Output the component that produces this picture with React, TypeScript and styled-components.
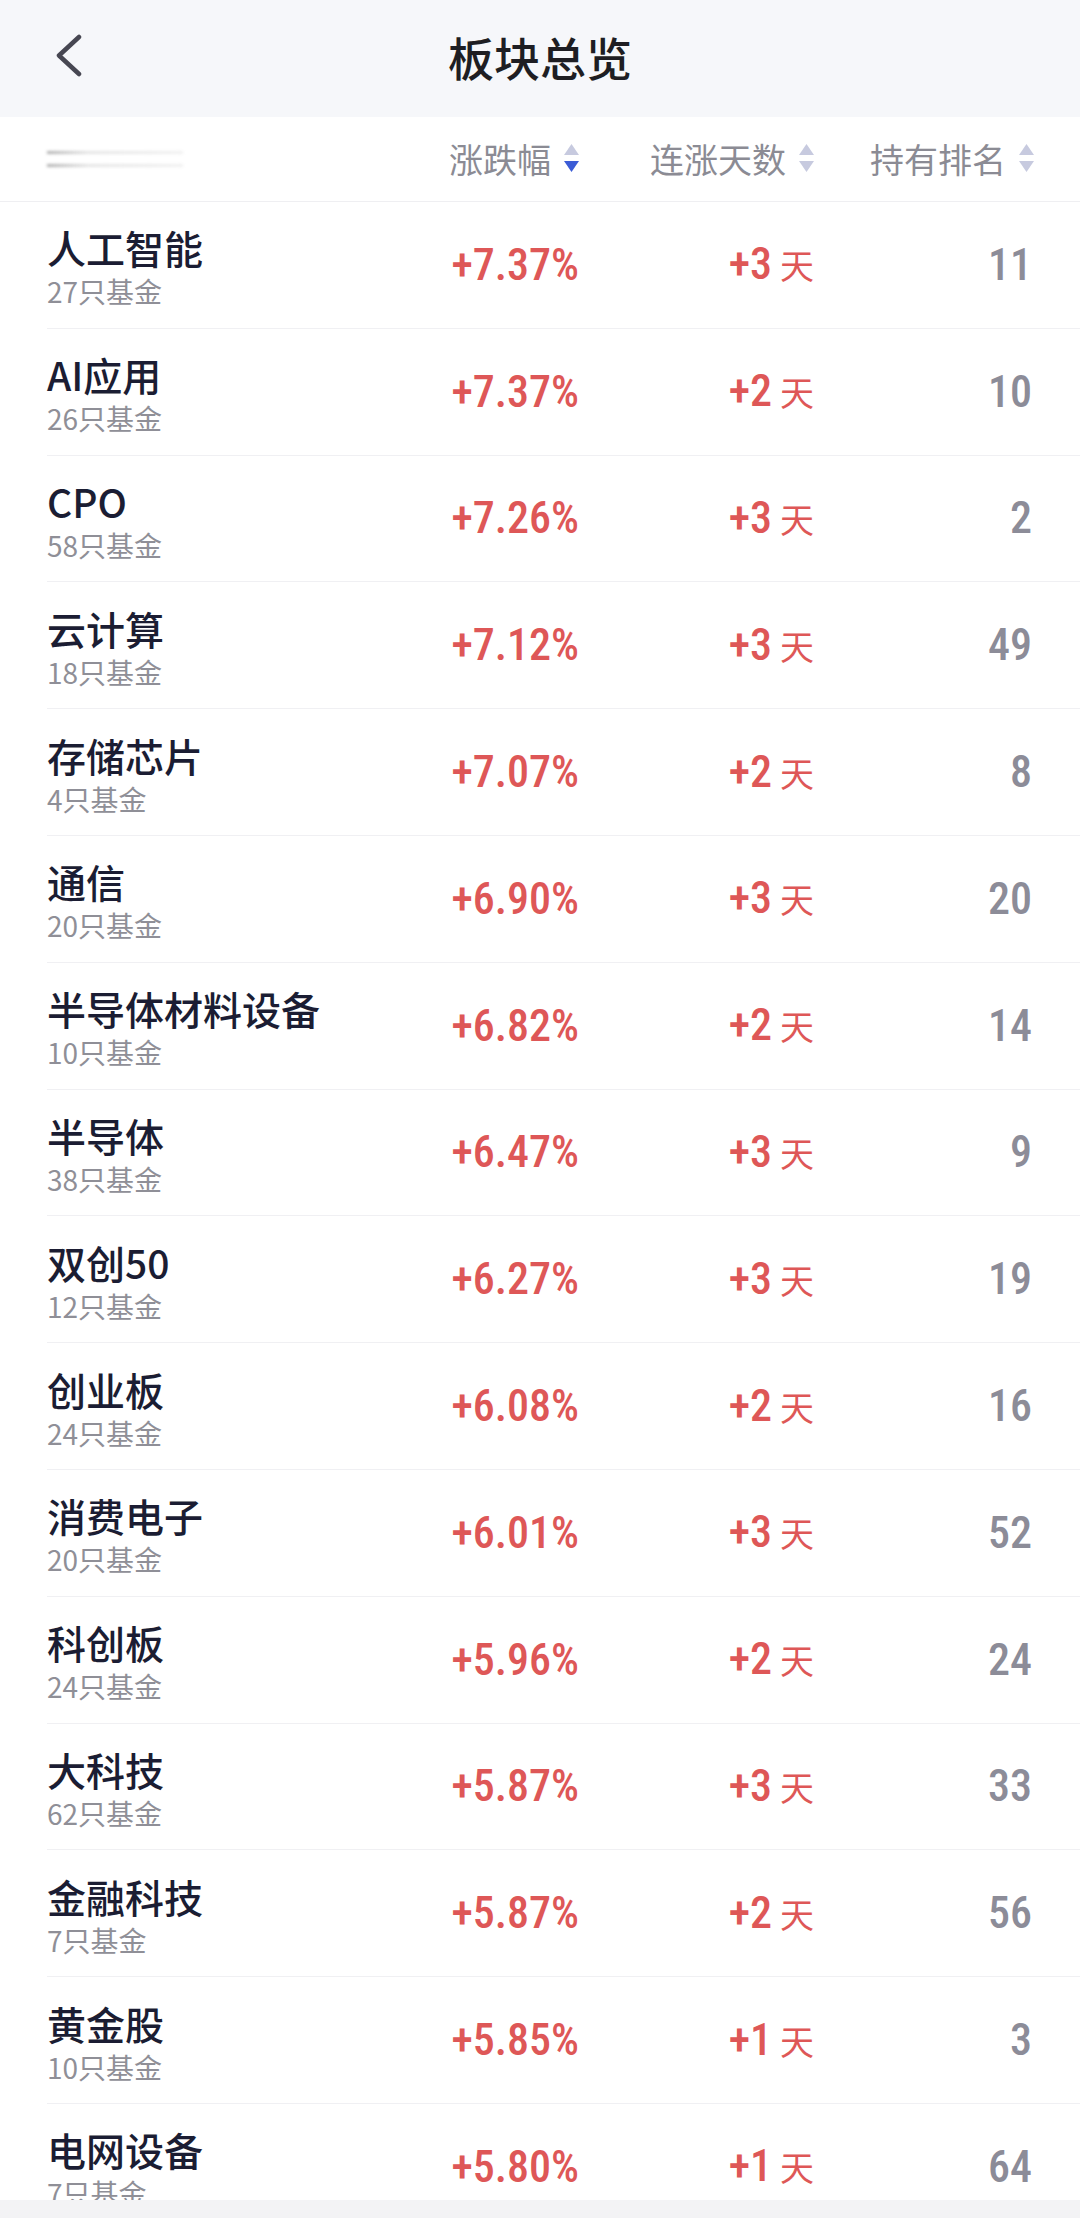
import styled, { createGlobalStyle } from 'styled-components';

const CJK = '"Noto Sans CJK SC", "Noto Sans", sans-serif';
const NUM = '"Liberation Sans Narrow", "Roboto Condensed", "DejaVu Sans Condensed", Roboto, "Noto Sans CJK SC", sans-serif';

const GlobalStyle = createGlobalStyle`
  html, body {
    margin: 0;
    padding: 0;
    background: #ffffff;
  }
  * {
    box-sizing: border-box;
  }
`;

const Page = styled.div`
  width: 1080px;
  height: 2218px;
  display: flex;
  flex-direction: column;
  overflow: hidden;
  background: #ffffff;
  font-family: ${CJK};
`;

const NavBar = styled.header`
  height: 117px;
  flex-shrink: 0;
  display: grid;
  grid-template-columns: 160px 1fr 160px;
  align-items: center;
  padding-bottom: 5px;
  background: #f6f7fa;
`;

const BackButton = styled.div`
  padding-left: 54px;
  display: flex;
  align-items: center;
`;

const Title = styled.h1`
  margin: 0;
  text-align: center;
  font-size: 46px;
  font-weight: 500;
  line-height: 56px;
  color: #1e1e23;
`;

const columns = '1fr 200px 235px 220px';

const TableHead = styled.div`
  height: 85px;
  flex-shrink: 0;
  display: grid;
  grid-template-columns: ${columns};
  align-items: center;
  padding: 0 46px 0 47px;
  border-bottom: 1px solid #efeff2;
`;

const Redacted = styled.div`
  width: 136px;
  display: flex;
  flex-direction: column;
  gap: 10px;
  filter: blur(1.6px);
`;

const RedactedLine = styled.div`
  height: 3px;
  background: linear-gradient(
    to right,
    rgba(110, 110, 110, 0.55) 0%,
    rgba(160, 160, 160, 0.28) 30%,
    rgba(180, 180, 180, 0.2) 100%
  );
`;

const HeadCell = styled.div`
  display: flex;
  justify-content: flex-end;
  align-items: center;
  gap: 13px;
  font-size: 34px;
  line-height: 40px;
  color: #8b8b94;
  white-space: nowrap;
`;

const List = styled.div`
  flex: 1;
  overflow: hidden;
`;

const Row = styled.div`
  height: 126.8px;
  margin-left: 47px;
  padding-right: 46px;
  display: grid;
  grid-template-columns: ${columns};
  align-items: center;
  border-bottom: 1px solid #f0f0f3;
`;

const NameBlock = styled.div`
  display: flex;
  flex-direction: column;
  padding-top: 3px;
`;

const Name = styled.div`
  font-size: 39px;
  line-height: 46px;
  font-weight: 500;
  color: #1b1d33;
  white-space: nowrap;
`;

const Sub = styled.div`
  margin-top: 4px;
  font-size: 28px;
  line-height: 34px;
  color: #8f8f97;
`;

const Value = styled.div<{ $tone: 'up' | 'muted'; $inset?: number }>`
  text-align: right;
  padding-right: ${(p) => p.$inset ?? 0}px;
  font-family: ${NUM};
  font-size: 44px;
  font-weight: 500;
  line-height: 50px;
  color: ${(p) => (p.$tone === 'up' ? '#de5757' : '#8c8c98')};
  white-space: nowrap;
`;

const DayUnit = styled.span`
  margin-left: 8px;
  font-family: ${CJK};
  font-size: 34px;
  font-weight: 400;
`;

const BottomBar = styled.div`
  height: 18px;
  flex-shrink: 0;
  background: #f3f3f5;
`;

function ChevronLeft() {
  return (
    <svg width="34" height="44" viewBox="0 0 34 44" fill="none">
      <polyline
        points="25,3 5,21.5 25,40"
        stroke="#474752"
        strokeWidth="4.5"
        strokeLinecap="round"
        strokeLinejoin="round"
      />
    </svg>
  );
}

function SortIcon({ dir }: { dir?: 'up' | 'down' }) {
  const on = '#3b5cd6';
  const off = '#c7cadf';
  return (
    <svg width="15" height="30" viewBox="0 0 15 30">
      <polygon points="7.5,0 15,11 0,11" fill={dir === 'up' ? on : off} />
      <polygon points="0,17 15,17 7.5,28" fill={dir === 'down' ? on : off} />
    </svg>
  );
}

interface Sector {
  name: string;
  funds: number;
  change: string;
  days: number;
  rank: number;
}

const sectors: Sector[] = [
  { name: '人工智能', funds: 27, change: '+7.37%', days: 3, rank: 11 },
  { name: 'AI应用', funds: 26, change: '+7.37%', days: 2, rank: 10 },
  { name: 'CPO', funds: 58, change: '+7.26%', days: 3, rank: 2 },
  { name: '云计算', funds: 18, change: '+7.12%', days: 3, rank: 49 },
  { name: '存储芯片', funds: 4, change: '+7.07%', days: 2, rank: 8 },
  { name: '通信', funds: 20, change: '+6.90%', days: 3, rank: 20 },
  { name: '半导体材料设备', funds: 10, change: '+6.82%', days: 2, rank: 14 },
  { name: '半导体', funds: 38, change: '+6.47%', days: 3, rank: 9 },
  { name: '双创50', funds: 12, change: '+6.27%', days: 3, rank: 19 },
  { name: '创业板', funds: 24, change: '+6.08%', days: 2, rank: 16 },
  { name: '消费电子', funds: 20, change: '+6.01%', days: 3, rank: 52 },
  { name: '科创板', funds: 24, change: '+5.96%', days: 2, rank: 24 },
  { name: '大科技', funds: 62, change: '+5.87%', days: 3, rank: 33 },
  { name: '金融科技', funds: 7, change: '+5.87%', days: 2, rank: 56 },
  { name: '黄金股', funds: 10, change: '+5.85%', days: 1, rank: 3 },
  { name: '电网设备', funds: 7, change: '+5.80%', days: 1, rank: 64 },
];

export default function App() {
  return (
    <>
      <GlobalStyle />
      <Page>
        <NavBar>
          <BackButton>
            <ChevronLeft />
          </BackButton>
          <Title>板块总览</Title>
          <div />
        </NavBar>

        <TableHead>
          <Redacted>
            <RedactedLine />
            <RedactedLine />
          </Redacted>
          <HeadCell>
            涨跌幅
            <SortIcon dir="down" />
          </HeadCell>
          <HeadCell>
            连涨天数
            <SortIcon />
          </HeadCell>
          <HeadCell>
            持有排名
            <SortIcon />
          </HeadCell>
        </TableHead>

        <List>
          {sectors.map((s) => (
            <Row key={s.name}>
              <NameBlock>
                <Name>{s.name}</Name>
                <Sub>{s.funds}只基金</Sub>
              </NameBlock>
              <Value $tone="up">{s.change}</Value>
              <Value $tone="up">
                +{s.days}
                <DayUnit>天</DayUnit>
              </Value>
              <Value $tone="muted" $inset={2}>
                {s.rank}
              </Value>
            </Row>
          ))}
        </List>

        <BottomBar />
      </Page>
    </>
  );
}
